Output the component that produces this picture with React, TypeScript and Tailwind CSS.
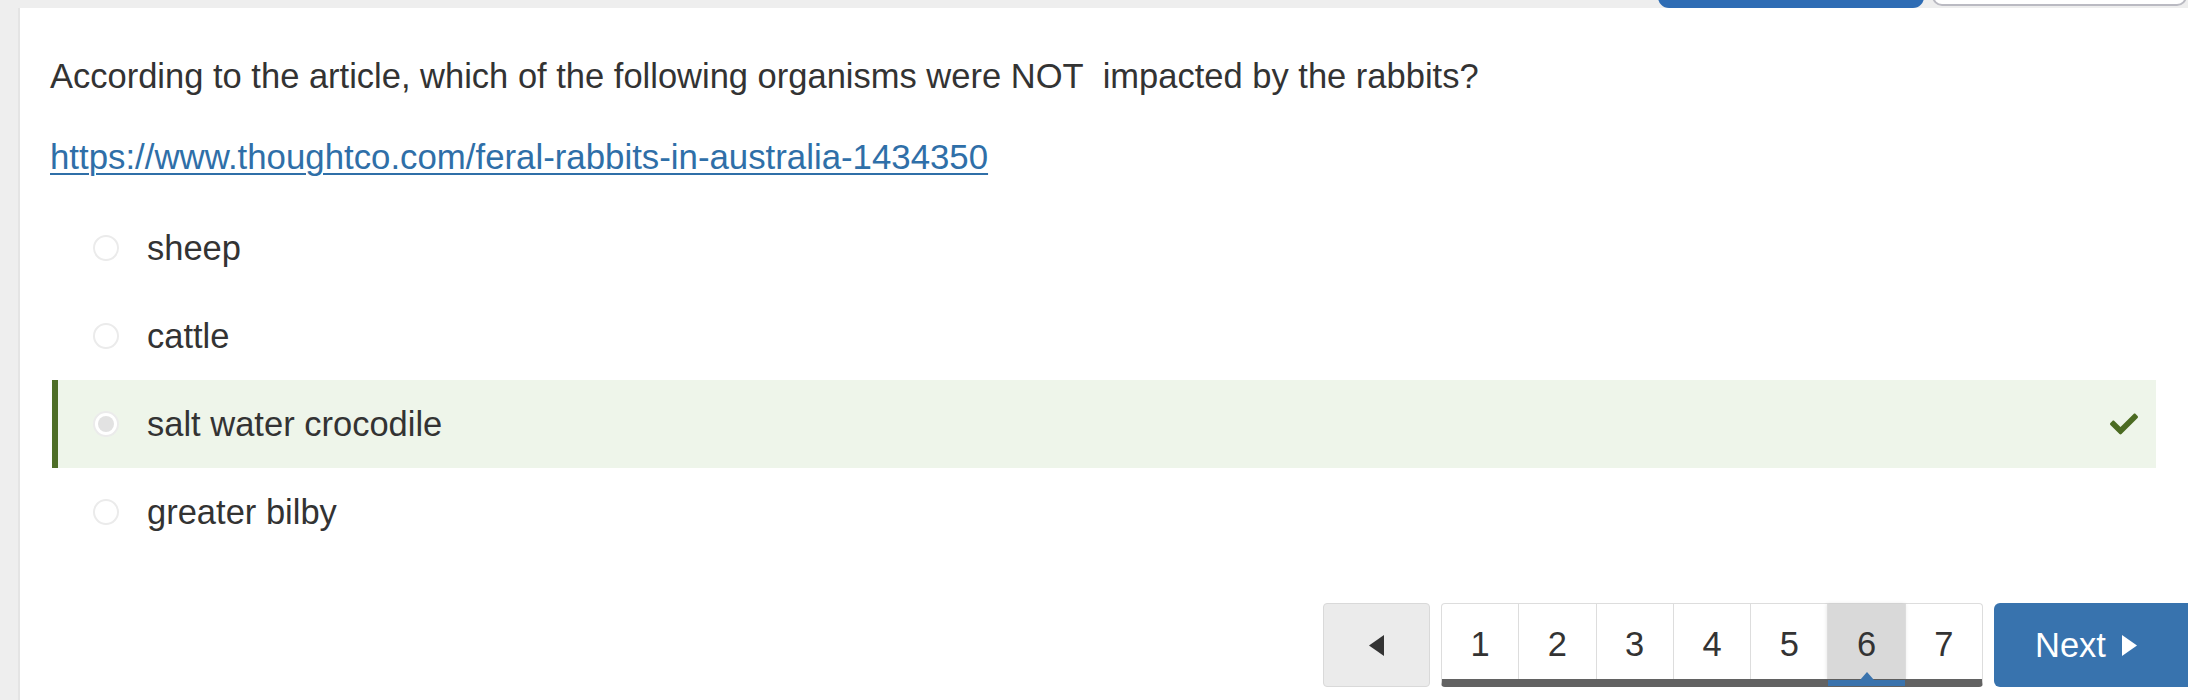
import React from 'react';
import { FaCheck } from 'react-icons/fa';

const options = [
  { label: 'sheep', selected: false },
  { label: 'cattle', selected: false },
  { label: 'salt water crocodile', selected: true },
  { label: 'greater bilby', selected: false },
];

const pages = [1, 2, 3, 4, 5, 6, 7];
const current = 6;

const Radio = ({ checked }: { checked: boolean }) => (
  <span className="flex h-[26px] w-[26px] shrink-0 items-center justify-center rounded-full border-2 border-[#ebebeb] bg-white">
    {checked && <span className="h-[16px] w-[16px] rounded-full bg-[#e2e2e2]" />}
  </span>
);

const App = () => {
  return (
    <div className="min-h-screen overflow-hidden bg-[#eeeeee] pl-[18px] font-['Liberation_Sans',Arial,sans-serif] text-[#333333]">
      {/* buttons from the toolbar above, mostly scrolled out of view */}
      <div className="flex h-[8px] items-end justify-end gap-[8px] overflow-hidden pr-[1px]">
        <div className="h-[40px] w-[266px] shrink-0 rounded-b-[11px] bg-[#2e6cb4]" />
        <div className="mb-[2px] h-[40px] w-[255px] shrink-0 rounded-b-[10px] border-2 border-[#babac2] bg-white" />
      </div>

      <div className="min-h-[692px] border-l-2 border-[#e4e4e4] bg-white pl-[30px] pr-[32px] pt-[44px]">
        <p className="text-[34.5px] leading-[48px]">
          According to the article, which of the following organisms were NOT&nbsp; impacted by the rabbits?
        </p>

        <p className="mt-[33px] text-[34.8px] leading-[48px]">
          <a
            href="#"
            className="text-[#2f6fa8] underline decoration-[2px] underline-offset-[4px]"
          >
            https://www.thoughtco.com/feral-rabbits-in-australia-1434350
          </a>
        </p>

        <ul className="ml-[2px] mt-[23px]">
          {options.map((o) => (
            <li
              key={o.label}
              className={
                o.selected
                  ? 'flex h-[88px] items-center border-l-[6px] border-[#4e6e27] bg-[#eef5ea] pl-[35px] pr-[18px]'
                  : 'flex h-[88px] items-center border-l-[6px] border-transparent pl-[35px] pr-[18px]'
              }
            >
              <Radio checked={o.selected} />
              <span className="ml-[28px] text-[34.5px] leading-none">{o.label}</span>
              {o.selected && <FaCheck className="ml-auto text-[#4b6b22]" size={28} />}
            </li>
          ))}
        </ul>

        <div className="mr-[-32px] mt-[47px] flex items-stretch justify-end gap-[11px]">
          <button className="flex h-[84px] w-[107px] items-center justify-center rounded-[4px] border border-[#d9d9d9] bg-[#ebebeb]">
            <svg width="15" height="21" viewBox="0 0 15 21">
              <polygon points="15,0 15,21 0,10.5" fill="#333333" />
            </svg>
          </button>

          <div className="flex h-[84px] w-[542px] rounded-[4px] border border-b-[8px] border-[#dddddd] border-b-[#626262]">
            {pages.map((p, i) => (
              <div
                key={p}
                className={
                  (i > 0 ? 'border-l border-[#dddddd] ' : '') +
                  (p === current ? 'relative bg-[#d9d9d9] shadow-[0_0_4px_rgba(0,0,0,0.12)] ' : 'relative ') +
                  'flex flex-1 items-center justify-center pt-[6px] text-[34.5px] leading-none'
                }
              >
                {p}
                {p === current && (
                  <>
                    <span className="absolute bottom-[-7px] left-0 right-0 h-[6px] bg-[#3a73ad]" />
                    <span className="absolute bottom-[-1px] left-1/2 h-0 w-0 -translate-x-1/2 border-x-[7px] border-b-[8px] border-x-transparent border-b-[#3a73ad]" />
                  </>
                )}
              </div>
            ))}
          </div>

          <button className="flex h-[84px] w-[194px] items-center rounded-l-[6px] bg-[#3873ae] pl-[41px] text-[34.5px] leading-none text-white">
            Next
            <svg className="ml-[16px]" width="15" height="21" viewBox="0 0 15 21">
              <polygon points="0,0 15,10.5 0,21" fill="#ffffff" />
            </svg>
          </button>
        </div>
      </div>
    </div>
  );
};

export default App;
